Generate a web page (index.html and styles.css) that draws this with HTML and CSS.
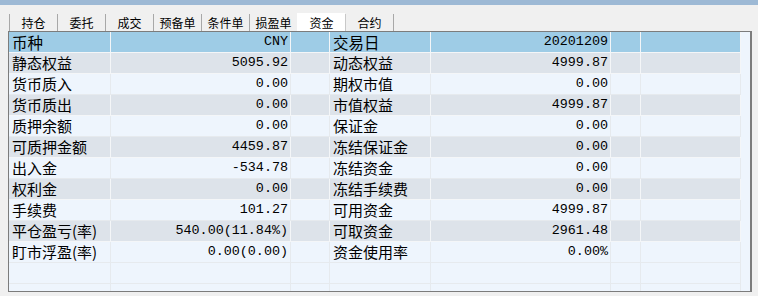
FILE: index.html
```html
<!DOCTYPE html>
<html lang="zh-CN">
<head>
  <meta charset="UTF-8">
  <title>资金</title>
  <link rel="stylesheet" href="styles.css">
</head>
<body>
  <div class="topbar"></div>
  <div class="tabs">
    <div class="tab">持仓</div>
    <div class="tab">委托</div>
    <div class="tab">成交</div>
    <div class="tab">预备单</div>
    <div class="tab">条件单</div>
    <div class="tab">损盈单</div>
    <div class="tab active">资金</div>
    <div class="tab">合约</div>
  </div>
  <div class="panel">
    <div class="grid">
      <div class="row head">
        <div class="cell label">币种</div><div class="cell num">CNY</div><div class="cell"></div>
        <div class="cell label">交易日</div><div class="cell num">20201209</div><div class="cell"></div><div class="cell"></div>
      </div>
      <div class="row odd">
        <div class="cell label">静态权益</div><div class="cell num">5095.92</div><div class="cell"></div>
        <div class="cell label">动态权益</div><div class="cell num">4999.87</div><div class="cell"></div><div class="cell"></div>
      </div>
      <div class="row">
        <div class="cell label">货币质入</div><div class="cell num">0.00</div><div class="cell"></div>
        <div class="cell label">期权市值</div><div class="cell num">0.00</div><div class="cell"></div><div class="cell"></div>
      </div>
      <div class="row odd">
        <div class="cell label">货币质出</div><div class="cell num">0.00</div><div class="cell"></div>
        <div class="cell label">市值权益</div><div class="cell num">4999.87</div><div class="cell"></div><div class="cell"></div>
      </div>
      <div class="row">
        <div class="cell label">质押余额</div><div class="cell num">0.00</div><div class="cell"></div>
        <div class="cell label">保证金</div><div class="cell num">0.00</div><div class="cell"></div><div class="cell"></div>
      </div>
      <div class="row odd">
        <div class="cell label">可质押金额</div><div class="cell num">4459.87</div><div class="cell"></div>
        <div class="cell label">冻结保证金</div><div class="cell num">0.00</div><div class="cell"></div><div class="cell"></div>
      </div>
      <div class="row">
        <div class="cell label">出入金</div><div class="cell num">-534.78</div><div class="cell"></div>
        <div class="cell label">冻结资金</div><div class="cell num">0.00</div><div class="cell"></div><div class="cell"></div>
      </div>
      <div class="row odd">
        <div class="cell label">权利金</div><div class="cell num">0.00</div><div class="cell"></div>
        <div class="cell label">冻结手续费</div><div class="cell num">0.00</div><div class="cell"></div><div class="cell"></div>
      </div>
      <div class="row">
        <div class="cell label">手续费</div><div class="cell num">101.27</div><div class="cell"></div>
        <div class="cell label">可用资金</div><div class="cell num">4999.87</div><div class="cell"></div><div class="cell"></div>
      </div>
      <div class="row odd">
        <div class="cell label">平仓盈亏(率)</div><div class="cell num">540.00(11.84%)</div><div class="cell"></div>
        <div class="cell label">可取资金</div><div class="cell num">2961.48</div><div class="cell"></div><div class="cell"></div>
      </div>
      <div class="row">
        <div class="cell label">盯市浮盈(率)</div><div class="cell num">0.00(0.00)</div><div class="cell"></div>
        <div class="cell label">资金使用率</div><div class="cell num">0.00%</div><div class="cell"></div><div class="cell"></div>
      </div>
      <div class="row">
        <div class="cell"></div><div class="cell"></div><div class="cell"></div>
        <div class="cell"></div><div class="cell"></div><div class="cell"></div><div class="cell"></div>
      </div>
      <div class="row">
        <div class="cell"></div><div class="cell"></div><div class="cell"></div>
        <div class="cell"></div><div class="cell"></div><div class="cell"></div><div class="cell"></div>
      </div>
    </div>
  </div>
</body>
</html>
```

FILE: styles.css
```css
html, body {
  margin: 0;
  padding: 0;
}
body {
  width: 758px;
  height: 296px;
  overflow: hidden;
  background: #f0f0f0;
  font-family: "Noto Sans CJK SC", sans-serif;
  color: #000;
}
.topbar {
  height: 5px;
  background: #9db9d5;
}
.tabs {
  display: flex;
  margin-top: 9px;
  padding-left: 9px;
  height: 17px;
}
.tab {
  width: 47px;
  border-left: 1px solid #a8a8a8;
  font-size: 12px;
  line-height: 17px;
  text-align: center;
}
.tab.active {
  background: #fff;
  border-left-color: #fff;
  margin-top: -1px;
  height: 18px;
  line-height: 19px;
}
.tab.active + .tab {
  border-left-color: #c8c8c8;
}
.tab:last-child {
  border-right: 1px solid #a8a8a8;
}
.panel {
  margin-left: 8px;
  width: 741px;
  height: 259px;
  border: 1px solid #7c7c7c;
  border-right-width: 2px;
  background: #eef5fd;
  overflow: hidden;
}
.grid {
  width: 732px;
}
.row {
  display: grid;
  grid-template-columns: 102px 180px 39px 101px 180px 30px 100px;
  height: 21px;
}
.row.head {
  background: #9ecce6;
}
.row.odd {
  background: #dde3ea;
}
.cell {
  border-right: 1px solid #f4f6f8;
  border-bottom: 1px solid #f4f6f8;
  height: 20px;
  line-height: 20px;
  white-space: nowrap;
}
.row:not(.odd):not(.head) .cell {
  border-color: #e6eaee;
}
.label {
  padding-left: 3px;
  font-size: 15px;
}
.head .label {
  font-size: 15.5px;
}
.num {
  text-align: right;
  padding-right: 2px;
  font-family: "Liberation Mono", monospace;
  font-size: 13.4px;
}
```
